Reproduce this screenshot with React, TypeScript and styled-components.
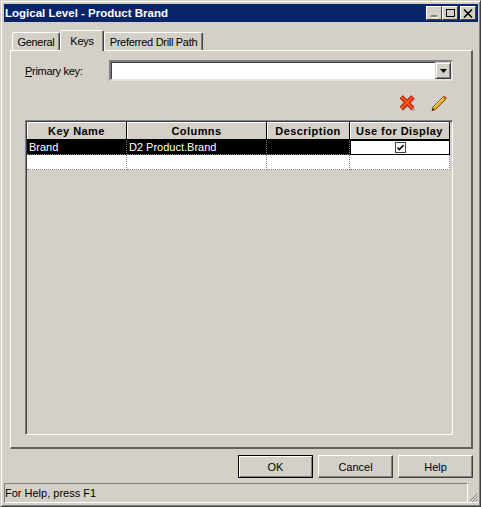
import React from "react";
import styled, { createGlobalStyle } from "styled-components";

const Global = createGlobalStyle`
  html, body { margin: 0; padding: 0; background: #d4d0c8; }
  body { font-family: "Liberation Sans", Arial, sans-serif; font-size: 11px; color: #000; white-space: nowrap; }
`;

const Win = styled.div`
  box-sizing: border-box;
  width: 481px;
  height: 507px;
  display: flex;
  flex-direction: column;
  padding: 3px 2px 3px 3px;
  background: #d4d0c8;
  border: 1px solid;
  border-color: #d4d0c8 #404040 #404040 #d4d0c8;
  box-shadow: inset 1px 1px #fff, inset -1px -1px #808080;
`;
const TitleBar = styled.div`
  height: 18px;
  flex: none;
  display: flex;
  align-items: center;
  justify-content: space-between;
  padding: 0 2px 0 1px;
  background: #0a246a;
  color: #fff;
  font-weight: 700;
  font-size: 11.5px;
`;
const Controls = styled.div`
  display: flex;
  align-items: center;
`;
const Ctl = styled.div<{ $gap?: number }>`
  box-sizing: border-box;
  width: 16px;
  height: 14px;
  margin-left: ${(p) => p.$gap ?? 0}px;
  display: flex;
  align-items: center;
  justify-content: center;
  background: #d4d0c8;
  border: 1px solid;
  border-color: #fff #404040 #404040 #fff;
`;
const Tabs = styled.div`
  flex: none;
  height: 20px;
  margin: 8px 0 0 8px;
  display: flex;
  align-items: flex-end;
  position: relative;
  z-index: 1;
`;
const Tab = styled.div<{ $active?: boolean; $w: number }>`
  box-sizing: border-box;
  width: ${(p) => p.$w}px;
  height: ${(p) => (p.$active ? 21 : 18)}px;
  margin-bottom: ${(p) => (p.$active ? -1 : 0)}px;
  display: flex;
  align-items: center;
  justify-content: center;
  letter-spacing: -0.3px;
  background: #d4d0c8;
  border: 1px solid;
  border-bottom: 0;
  border-color: #fff #404040 transparent #fff;
  border-radius: 2px 2px 0 0;
  box-shadow: inset -1px 0 #808080;
`;
const Panel = styled.div`
  box-sizing: border-box;
  flex: none;
  height: 399px;
  margin: 0 5px 0 6px;
  padding: 9px 18px 0 14px;
  border: solid;
  border-width: 1px 2px 2px 1px;
  border-color: #fff #606060 #606060 #fff;
`;
const KeyRow = styled.div`
  display: flex;
  align-items: center;
  height: 21px;
`;
const Label = styled.label`
  width: 84px;
  flex: none;
  letter-spacing: -0.3px;
  u { text-decoration: underline; }
`;
const Combo = styled.div`
  box-sizing: border-box;
  flex: 1;
  height: 21px;
  display: flex;
  justify-content: flex-end;
  background: #fff;
  border: 2px solid;
  border-color: #808080 #e4e2dc #e4e2dc #808080;
  box-shadow: inset 1px 1px #404040;
`;
const ComboBtn = styled.div`
  box-sizing: border-box;
  width: 16px;
  height: 17px;
  display: flex;
  align-items: center;
  justify-content: center;
  background: #d4d0c8;
  border: 1px solid;
  border-color: #d4d0c8 #404040 #404040 #d4d0c8;
  box-shadow: inset 1px 1px #fff, inset -1px -1px #808080;
`;
const Tools = styled.div`
  display: flex;
  justify-content: flex-end;
  gap: 16px;
  height: 16px;
  margin-top: 14px;
  padding-right: 6px;
`;
const Grid = styled.div`
  box-sizing: border-box;
  height: 315px;
  margin-top: 9px;
  background: #d4d0c8;
  border: 1px solid;
  border-color: #808080 #fff #fff #808080;
  box-shadow: inset 1px 1px #404040;
  padding: 1px 1px 0 1px;
`;
const GridRow = styled.div`
  display: grid;
  grid-template-columns: 100px 140px 83px 100px;
  width: 424px;
`;
const Head = styled.div`
  box-sizing: border-box;
  height: 18px;
  display: flex;
  align-items: center;
  justify-content: center;
  font-weight: 700;
  letter-spacing: 0.45px;
  background: #d4d0c8;
  border-right: 1px solid #000;
  border-bottom: 1px solid #000;
  box-shadow: inset 1px 1px #fff;
`;
const Cell = styled.div<{ $sel?: boolean; $check?: boolean }>`
  box-sizing: border-box;
  height: 15px;
  display: flex;
  align-items: center;
  justify-content: ${(p) => (p.$check ? "center" : "flex-start")};
  padding-left: ${(p) => (p.$check ? 0 : 2)}px;
  background: ${(p) => (p.$sel ? "#000" : "#fff")};
  color: ${(p) => (p.$sel ? "#fff" : "#000")};
  border-right: 1px dotted #808080;
  border-bottom: 1px dotted #808080;
  ${(p) => p.$check && p.$sel && "background:#fff;color:#000;border:1px solid #000;"}
`;
const Buttons = styled.div`
  flex: none;
  display: flex;
  justify-content: flex-end;
  gap: 5px;
  margin-top: 6px;
  padding-right: 5px;
`;
const Btn = styled.button<{ $def?: boolean }>`
  box-sizing: border-box;
  width: 75px;
  height: 23px;
  padding: 0;
  font: inherit;
  color: #000;
  background: #d4d0c8;
  border: 1px solid;
  border-color: ${(p) => (p.$def ? "#000" : "#fff #404040 #404040 #fff")};
  box-shadow: ${(p) => (p.$def ? "inset 1px 1px #fff, inset -1px -1px #808080" : "inset -1px -1px #808080")};
`;
const Status = styled.div`
  flex: none;
  display: flex;
  height: 20px;
  margin-top: 5px;
`;
const StatusText = styled.div`
  box-sizing: border-box;
  width: 464px;
  display: flex;
  align-items: center;
  border: 1px solid;
  border-color: #808080 #fff #fff #808080;
`;
const Grip = styled.div`
  flex: 1;
  display: flex;
  align-items: flex-end;
  justify-content: flex-end;
  border-bottom: 1px solid #fff;
`;

const CrossIcon = () => (
  <svg width="16" height="16" viewBox="0 0 16 16">
    <path d="M3 3 L15 15 M15 3 L3 15" stroke="#a09c94" strokeWidth="3.4" fill="none" />
    <path d="M2.2 1.8 L13.8 13.4 M13.8 1.8 L2.2 13.4" stroke="#b81000" strokeWidth="4.4" fill="none" />
    <path d="M2.2 1.8 L13.8 13.4 M13.8 1.8 L2.2 13.4" stroke="#ff5a14" strokeWidth="2.2" fill="none" />
  </svg>
);
const PencilIcon = () => (
  <svg width="16" height="16" viewBox="0 0 16 16">
    <path d="M1 15.5 L2 12 L12.5 1.5 L15 4 L4.5 14.5 Z" fill="#eea818" stroke="#6a4a08" strokeWidth="0.9" />
    <path d="M3 12 L12.5 2.5" stroke="#ffe890" strokeWidth="1" />
    <path d="M13 1.5 L15 3.5" stroke="#c84020" strokeWidth="2" />
    <path d="M1 15.5 L1.8 13 L3.5 14.7 Z" fill="#222" />
  </svg>
);

export default function App() {
  return (
    <Win>
      <Global />
      <TitleBar>
        <span>Logical Level - Product Brand</span>
        <Controls>
          <Ctl>
            <svg width="10" height="10" viewBox="0 0 10 10"><path d="M2 8H8" stroke="#808080" strokeWidth="2" /><path d="M3 9.5H9" stroke="#fff" strokeWidth="1" /></svg>
          </Ctl>
          <Ctl>
            <svg width="11" height="10" viewBox="0 0 11 10"><path d="M1.5 1.5H9.5V8.5H1.5Z M1 1.5H10" stroke="#000" strokeWidth="1" fill="none" /></svg>
          </Ctl>
          <Ctl $gap={2}>
            <svg width="10" height="9" viewBox="0 0 10 9"><path d="M1 0.5L9 8.5M9 0.5L1 8.5" stroke="#000" strokeWidth="1.6" fill="none" /></svg>
          </Ctl>
        </Controls>
      </TitleBar>
      <Tabs>
        <Tab $w={48}>General</Tab>
        <Tab $w={44} $active>Keys</Tab>
        <Tab $w={99}>Preferred Drill Path</Tab>
      </Tabs>
      <Panel>
        <KeyRow>
          <Label><u>P</u>rimary key:</Label>
          <Combo>
            <ComboBtn>
              <svg width="7" height="4" viewBox="0 0 7 4"><path d="M0 0H7L3.5 4Z" fill="#000" /></svg>
            </ComboBtn>
          </Combo>
        </KeyRow>
        <Tools>
          <CrossIcon />
          <PencilIcon />
        </Tools>
        <Grid>
          <GridRow>
            <Head>Key Name</Head>
            <Head>Columns</Head>
            <Head>Description</Head>
            <Head>Use for Display</Head>
          </GridRow>
          <GridRow>
            <Cell $sel>Brand</Cell>
            <Cell $sel>D2 Product.Brand</Cell>
            <Cell $sel />
            <Cell $sel $check>
              <svg width="11" height="11" viewBox="0 0 11 11">
                <rect x="0.5" y="0.5" width="10" height="10" fill="#fff" stroke="#404040" />
                <path d="M2.5 5.5L4.5 7.5L8.5 3" stroke="#000" strokeWidth="1.6" fill="none" />
              </svg>
            </Cell>
          </GridRow>
          <GridRow>
            <Cell />
            <Cell />
            <Cell />
            <Cell />
          </GridRow>
        </Grid>
      </Panel>
      <Buttons>
        <Btn $def>OK</Btn>
        <Btn>Cancel</Btn>
        <Btn>Help</Btn>
      </Buttons>
      <Status>
        <StatusText>For Help, press F1</StatusText>
        <Grip>
          <svg width="10" height="10" viewBox="0 0 10 10">
            <path d="M9.5 1.5L1.5 9.5M9.5 4.5L4.5 9.5M9.5 7.5L7.5 9.5" stroke="#808080" strokeWidth="1" />
          </svg>
        </Grip>
      </Status>
    </Win>
  );
}
